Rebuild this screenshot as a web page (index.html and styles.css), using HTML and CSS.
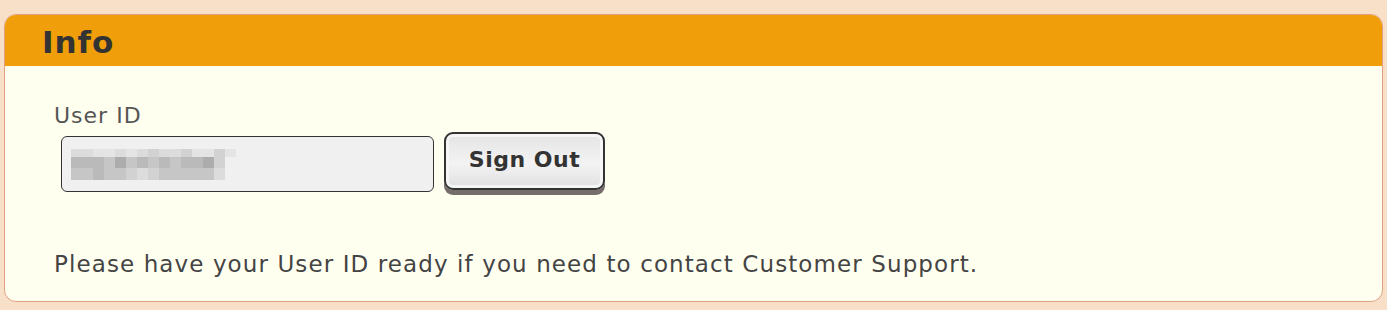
FILE: index.html
```html
<!DOCTYPE html>
<html lang="en">
<head>
    <meta charset="UTF-8">
    <meta name="viewport" content="width=device-width, initial-scale=1.0">
    <title>Info</title>
    <link rel="stylesheet" href="styles.css">
</head>
<body>
    <div class="card">
        <div class="card-head">Info</div>
        <div class="card-body">
            <div class="label">User ID</div>
            <div class="id-row">
                <div class="id-box">
                    <!-- pixelated user id -->
                    <div class="mosaic">
                        <i class="g5"></i><i class="g5"></i><i class="g6"></i><i class="g6"></i><i class="g5"></i><i class="g6"></i><i class="g5"></i><i class="g4"></i><i class="g5"></i><i class="g5"></i><i class="g4"></i><i class="g6"></i><i class="g6"></i><i class="g4"></i><i class="g6"></i><i class="g7"></i>
                        <i class="g2"></i><i class="g2"></i><i class="g2"></i><i class="g3"></i><i class="g1"></i><i class="g3"></i><i class="g2"></i><i class="g3"></i><i class="g2"></i><i class="g3"></i><i class="g2"></i><i class="g2"></i><i class="g1"></i><i class="g4"></i><i class="g7"></i><i class="g7"></i>
                        <i class="g3"></i><i class="g3"></i><i class="g2"></i><i class="g3"></i><i class="g3"></i><i class="g4"></i><i class="g5"></i><i class="g4"></i><i class="g3"></i><i class="g3"></i><i class="g3"></i><i class="g3"></i><i class="g3"></i><i class="g5"></i><i class="g7"></i><i class="g7"></i>
                    </div>
                </div>
                <button class="sign-out">Sign Out</button>
            </div>
            <p class="note">Please have your User ID ready if you need to contact Customer Support.</p>
        </div>
    </div>
</body>
</html>
```
FILE: styles.css
```css
body {
    margin: 0;
    background-color: #f7dfc8;
    font-family: 'DejaVu Sans', sans-serif;
    padding: 14px 4px 0 4px;
}

.card {
    border: 1px solid #e0a084;
    border-radius: 12px;
    overflow: hidden;
    background-color: #fffff0;
}

.card-head {
    background-color: #f09e0a;
    height: 51px;
    box-sizing: border-box;
    padding: 9px 0 0 37px;
    font-size: 31px;
    font-weight: bold;
    letter-spacing: 1px;
    color: #333;
    line-height: 36px;
}

.card-body {
    padding: 37px 0 22px 49px;
    height: 235px;
    box-sizing: border-box;
}

.label {
    font-size: 22px;
    letter-spacing: 1px;
    color: #555;
    line-height: 26px;
}

.id-row {
    display: flex;
    align-items: flex-start;
    gap: 10px;
    margin-top: 7px;
    padding-left: 7px;
}

.id-box {
    width: 373px;
    height: 56px;
    box-sizing: border-box;
    border: 1px solid #333;
    border-radius: 6px;
    background-color: #f0f0f0;
    display: flex;
    align-items: center;
    padding-left: 9px;
}

.mosaic {
    display: grid;
    grid-template-columns: repeat(16, 11px);
    grid-template-rows: 8px 11px 12px;
    filter: blur(0.6px);
}

.mosaic i { display: block; }
.g1 { background-color: #acacac; }
.g2 { background-color: #bababa; }
.g3 { background-color: #c6c6c6; }
.g4 { background-color: #d2d2d2; }
.g5 { background-color: #dcdcdc; }
.g6 { background-color: #e4e4e4; }
.g7 { background-color: #f0f0f0; }

.sign-out {
    width: 161px;
    height: 58px;
    margin-top: -4px;
    border: 2px solid #333;
    border-radius: 9px;
    background: linear-gradient(#e4e4e4, #f3f3f3 55%, #e0e0e0);
    box-shadow: inset 0 0 0 3px #f5f5f5, 0 5px 0 #776c6c;
    font-family: 'DejaVu Sans', sans-serif;
    font-size: 22px;
    font-weight: bold;
    letter-spacing: 0.5px;
    color: #333;
    padding: 0 0 4px 0;
}

.note {
    margin: 59px 0 0 0;
    font-size: 23px;
    letter-spacing: 1.1px;
    color: #444;
    line-height: 26px;
}
```
